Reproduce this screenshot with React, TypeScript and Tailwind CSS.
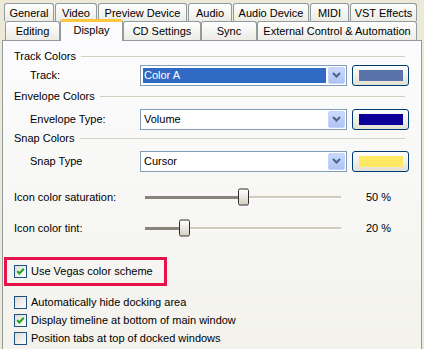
type TabDef = { label: string; w: string; selected?: boolean };

const topTabs: TabDef[] = [
  { label: 'General', w: 'w-[50px]' },
  { label: 'Video', w: 'w-[42px]' },
  { label: 'Preview Device', w: 'w-[89px]' },
  { label: 'Audio', w: 'w-[44px]' },
  { label: 'Audio Device', w: 'w-[76px]' },
  { label: 'MIDI', w: 'w-[39px]' },
  { label: 'VST Effects', w: 'w-[67px]' },
];

const bottomTabs: TabDef[] = [
  { label: 'Editing', w: 'w-[55px]' },
  { label: 'Display', w: 'w-[63px]', selected: true },
  { label: 'CD Settings', w: 'w-[78px]' },
  { label: 'Sync', w: 'w-[56px]' },
  { label: 'External Control & Automation', w: 'w-[160px]' },
];

const Tab = ({ label, w, selected }: TabDef) => {
  if (selected) {
    return (
      <div
        className={`${w} relative -mb-[1px] flex h-[22px] items-center justify-center rounded-t-[3px] border-x border-t-[3px] border-x-[#919b9c] border-t-[#ffc73c] bg-[#fcfcfe] pb-[2px] whitespace-nowrap`}
      >
        {label}
      </div>
    );
  }
  return (
    <div
      className={`${w} flex h-full items-center justify-center rounded-t-[3px] border border-b-0 border-[#919b9c] bg-linear-to-b from-white to-[#ecebe5] pt-[1px] whitespace-nowrap`}
    >
      {label}
    </div>
  );
};

const GroupHeader = ({ label }: { label: string }) => (
  <div className="flex h-[14px] items-center gap-[5px] pr-[16px]">
    <span>{label}</span>
    <div className="h-[1px] flex-1 bg-[#d0d0bf]" />
  </div>
);

const DropButton = () => (
  <div className="flex w-[17px] items-center justify-center rounded-[2px] border border-[#c3d3fd] bg-linear-to-b from-[#cbdafc] to-[#aec3f3]">
    <svg width="9" height="6" viewBox="0 0 9 6">
      <path d="M1 1 L4.5 4.5 L8 1" stroke="#4d6185" strokeWidth="2" fill="none" />
    </svg>
  </div>
);

type ColorRowProps = { label: string; value: string; swatch: string; highlighted?: boolean };

const ColorRow = ({ label, value, swatch, highlighted }: ColorRowProps) => (
  <div className="flex h-[22px] items-center pl-[16px]">
    <span className="w-[110px]">{label}</span>
    <div className="flex h-[21px] w-[207px] border border-[#7f9db9] bg-white p-[1px]">
      <div
        className={`m-[1px] mr-[2px] flex flex-1 items-center pl-[1px] ${highlighted ? 'bg-[#316ac5] text-white' : ''}`}
      >
        {value}
      </div>
      <DropButton />
    </div>
    <div className="ml-[5px] flex h-[21px] w-[57px] items-center justify-center rounded-[3px] border border-[#003c74] bg-linear-to-b from-white to-[#e3e0d3]">
      <div className={`h-[11px] w-[44px] ${swatch}`} />
    </div>
  </div>
);

const SliderRow = ({ label, pct }: { label: string; pct: number }) => (
  <div className="flex h-[20px] items-center">
    <span className="w-[131px]">{label}</span>
    <div className="relative flex h-[20px] w-[196px] items-center">
      <div className="h-[3px] bg-[#86847b]" style={{ width: `${pct * 1.96}px` }} />
      <div className="h-[3px] flex-1 border-b border-white bg-[#cfccbe]" />
      <div
        className="absolute top-1/2 h-[17px] w-[11px] -translate-y-1/2 rounded-[2px] border border-[#2e2e2e] bg-linear-to-b from-white to-[#d5d1c4]"
        style={{ left: `${pct * 1.96 - 5.5}px` }}
      />
    </div>
    <span className="ml-[25px]">{pct} %</span>
  </div>
);

const Check = ({ label, checked }: { label: string; checked?: boolean }) => (
  <div className="flex h-[17px] items-center gap-[4px]">
    <div className="flex h-[13px] w-[13px] items-center justify-center border border-[#1c5180] bg-linear-to-br from-[#dcdcd7] to-white">
      {checked && (
        <svg width="9" height="9" viewBox="0 0 9 9">
          <path d="M1.2 4.2 L3.3 6.5 L7.8 1.8" stroke="#21a121" strokeWidth="2" fill="none" />
        </svg>
      )}
    </div>
    <span className="whitespace-nowrap">{label}</span>
  </div>
);

export default function App() {
  return (
    <div className="h-[349px] w-[424px] overflow-hidden bg-[#ece9d8] font-['Liberation_Sans',Arial,sans-serif] text-[11px] leading-[13px] text-black">
      <div className="flex h-[21px] items-end gap-[1px] pl-[4px]">
        {topTabs.map((t) => (
          <div key={t.label} className="h-[18px]">
            <Tab {...t} />
          </div>
        ))}
      </div>
      <div className="relative z-10 flex h-[19px] items-end pl-[5px]">
        {bottomTabs.map((t) => (
          <Tab key={t.label} {...t} />
        ))}
      </div>
      <div className="ml-[2px] flex h-[312px] w-[420px] flex-col border border-[#919b9c] bg-linear-to-b from-[#fcfcfe] to-[#f3f2ec] pt-[8px] pl-[11px]">
        <GroupHeader label="Track Colors" />
        <div className="mt-[1px]">
          <ColorRow label="Track:" value="Color A" swatch="bg-[#5a73a9]" highlighted />
        </div>
        <div className="mt-[3px]">
          <GroupHeader label="Envelope Colors" />
        </div>
        <div className="mt-[5px]">
          <ColorRow label="Envelope Type:" value="Volume" swatch="bg-[#0c0098]" />
        </div>
        <div className="mt-[1px]">
          <GroupHeader label="Snap Colors" />
        </div>
        <div className="mt-[5px]">
          <ColorRow label="Snap Type" value="Cursor" swatch="bg-[#ffe862]" />
        </div>
        <div className="mt-[15px]">
          <SliderRow label="Icon color saturation:" pct={50} />
        </div>
        <div className="mt-[11px]">
          <SliderRow label="Icon color tint:" pct={20} />
        </div>
        <div className="mt-[19px] -ml-[10px] flex h-[29px] w-[163px] items-center border-[3px] border-[#e5134a] pl-[7px]">
          <Check label="Use Vegas color scheme" checked />
        </div>
        <div className="mt-[8px] flex flex-col gap-[1px]">
          <Check label="Automatically hide docking area" />
          <Check label="Display timeline at bottom of main window" checked />
          <Check label="Position tabs at top of docked windows" />
        </div>
      </div>
    </div>
  );
}
